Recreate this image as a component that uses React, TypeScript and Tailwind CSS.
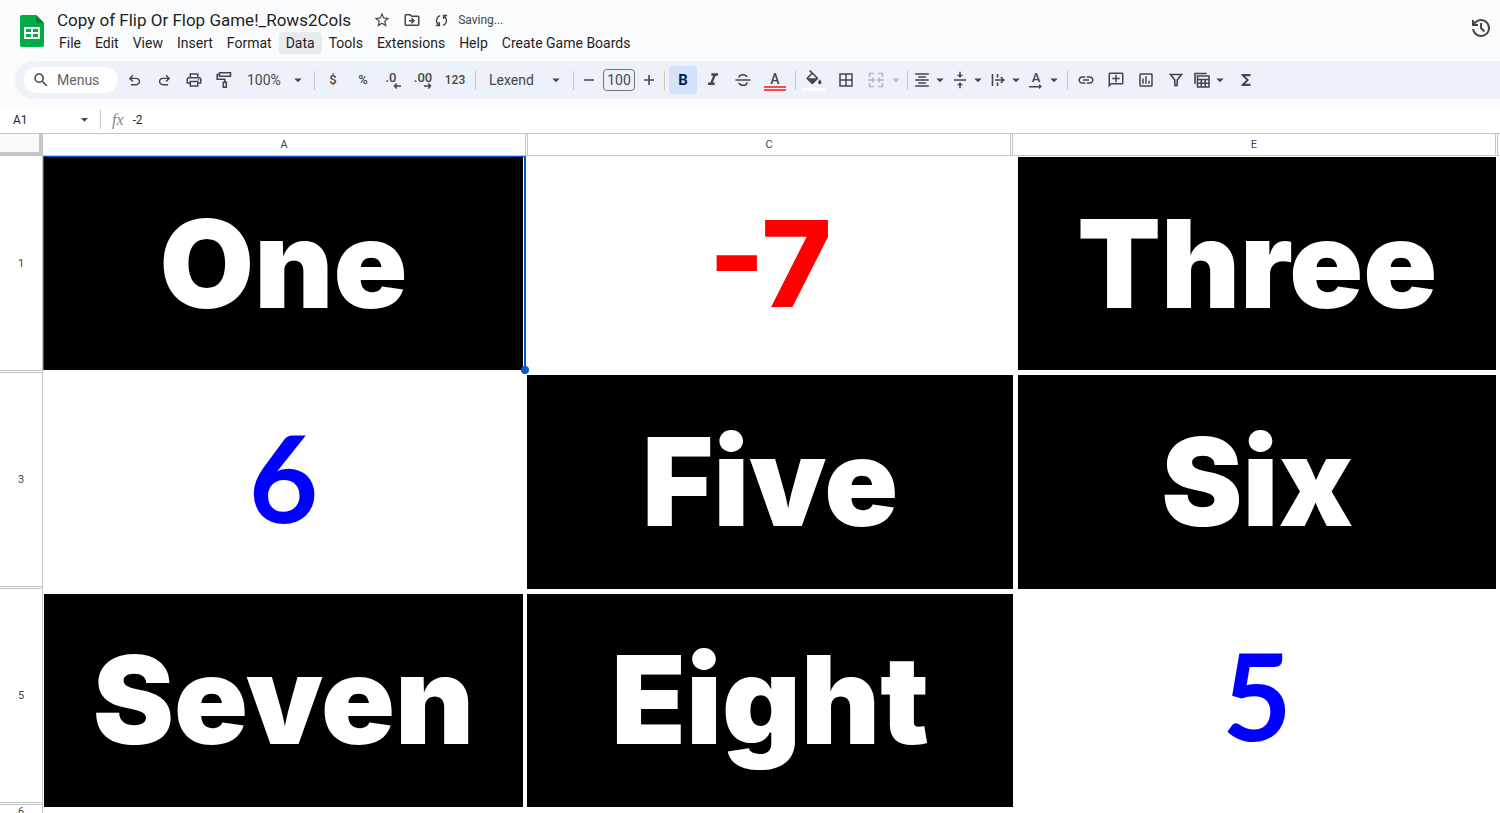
import React from 'react';
import {
  MdArrowDropDown,
  MdBorderAll,
  MdFormatAlignCenter,
  MdFormatItalic,
  MdFunctions,
  MdLink,
  MdOutlineAddComment,
  MdOutlineDriveFileMove,
  MdOutlineInsertChart,
  MdOutlinePrint,
  MdSearch,
  MdStarBorder,
  MdVerticalAlignCenter,
} from 'react-icons/md';

const MENUS = ['File', 'Edit', 'View', 'Insert', 'Format', 'Data', 'Tools', 'Extensions', 'Help', 'Create Game Boards'];

const UNDO =
  'M280-200v-80h284q63 0 109.5-40T720-420q0-60-46.5-100T564-560H312l104 104-56 56-200-200 200-200 56 56-104 104h252q97 0 166.5 63T800-420q0 94-69.5 157T564-200H280Z';
const REDO =
  'M396-200q-97 0-166.5-63T160-420q0-94 69.5-157T396-640h252L544-744l56-56 200 200-200 200-56-56 104-104H396q-63 0-109.5 40T240-420q0 60 46.5 100T396-280h284v80H396Z';
const SYNC =
  'M160-160v-80h110l-16-14q-52-46-73-105t-21-119q0-111 66.5-197.5T400-790v84q-72 26-116 88.5T240-478q0 45 17 87.5t53 78.5l10 10v-98h80v240H160Zm400-10v-84q72-26 116-88.5T720-482q0-45-17-87.5T650-648l-10-10v98h-80v-240h240v80H690l16 14q49 49 71.5 106.5T800-482q0 111-66.5 197.5T560-170Z';
const HISTORY =
  'M480-120q-138 0-240.5-91.5T122-440h82q14 104 92.5 172T480-200q117 0 198.5-81.5T760-480q0-117-81.5-198.5T480-760q-69 0-129 32t-101 88h110v80H120v-240h80v94q51-64 124.5-99T480-840q75 0 140.5 28.5t114 77q48.5 48.5 77 114T840-480q0 75-28.5 140.5t-77 114q-48.5 48.5-114 77T480-120Zm112-192L440-464v-216h80v184l128 128-56 56Z';

function Symbol({ d, size = 18 }: { d: string; size?: number }) {
  return (
    <svg width={size} height={size} viewBox="0 -960 960 960" fill="currentColor" aria-hidden="true">
      <path d={d} />
    </svg>
  );
}

function Glyph({ children }: { children: React.ReactNode }) {
  return (
    <svg width="18" height="18" viewBox="0 0 18 18" fill="none" stroke="currentColor" strokeWidth="1.6" className="shrink-0" aria-hidden="true">
      {children}
    </svg>
  );
}

function Tool({ label, className = 'w-7', children }: { label: string; className?: string; children: React.ReactNode }) {
  return (
    <button aria-label={label} className={`flex h-7 shrink-0 items-center justify-center rounded hover:bg-black/5 ${className}`}>
      {children}
    </button>
  );
}

function Divider({ className = 'mx-1' }: { className?: string }) {
  return <span className={`h-[19px] w-px shrink-0 bg-[#c7c7c7] ${className}`} />;
}

function SheetsLogo() {
  return (
    <svg width="24" height="32" viewBox="0 0 24 32" aria-label="Sheets">
      <path d="M2 0h14l8 8v22a2 2 0 0 1-2 2H2a2 2 0 0 1-2-2V2a2 2 0 0 1 2-2z" fill="#00ac47" />
      <path d="M16 0l8 8h-8z" fill="#00832d" />
      <path d="M4 12h16v12H4z" fill="#fff" />
      <path d="M6 14h5v3H6zM13 14h5v3h-5zM6 19h5v3H6zM13 19h5v3h-5z" fill="#00ac47" />
    </svg>
  );
}

function TitleBar() {
  return (
    <header className="flex items-start pt-2 pl-5 pr-[7px]">
      <a href="#home" aria-label="Sheets home" className="mt-[7px] shrink-0">
        <SheetsLogo />
      </a>
      <div className="ml-[7px] flex-1">
        <div className="flex h-6 items-center pl-[6px] text-[#444746]">
          <h1 className="text-[17px] leading-6 text-[#1f1f1f]">Copy of Flip Or Flop Game!_Rows2Cols</h1>
          <button aria-label="Star" className="ml-[22px]"><MdStarBorder size={18} /></button>
          <button aria-label="Move" className="ml-3"><MdOutlineDriveFileMove size={18} /></button>
          <span className="ml-3 flex items-center gap-2 text-[12px]">
            <Symbol d={SYNC} size={17} />
            Saving...
          </span>
        </div>
        <nav className="flex pl-px text-[14px] leading-[22px] text-[#1f1f1f]">
          {MENUS.map((menu) => (
            <button key={menu} className={`h-[22px] rounded px-[7px] ${menu === 'Data' ? 'bg-[#e8ebee]' : ''}`}>
              {menu}
            </button>
          ))}
        </nav>
      </div>
      <button aria-label="Version history" className="mt-2 text-[#444746]">
        <Symbol d={HISTORY} size={24} />
      </button>
    </header>
  );
}

function Toolbar() {
  return (
    <div role="toolbar" className="mt-[7px] ml-[15px] flex h-[38px] items-center overflow-hidden rounded-l-full bg-[#edf2fa] pl-[9px] text-[#444746]">
      <label className="mr-[2px] flex h-[26px] w-[94px] shrink-0 items-center rounded-full bg-white pl-2">
        <MdSearch size={18} className="shrink-0" />
        <input aria-label="Search menus" placeholder="Menus" className="ml-[7px] w-14 text-[14px] outline-none placeholder:text-[#5f6368]" />
      </label>
      <div className="flex gap-[2px]">
        <Tool label="Undo"><Symbol d={UNDO} size={17} /></Tool>
        <Tool label="Redo"><Symbol d={REDO} size={17} /></Tool>
        <Tool label="Print"><MdOutlinePrint size={18} /></Tool>
        <Tool label="Paint format">
          <Glyph>
            <path d="M4.5 1.8h11v3.5h-11zM4.500 3.500H2.200v4.700h7.600v3M8.300 11.200h3v5h-3z" />
          </Glyph>
        </Tool>
      </div>
      <label className="ml-[9px] flex h-7 w-[60px] shrink-0 items-center">
        <select aria-label="Zoom" defaultValue="100%" className="w-[42px] appearance-none text-[14px] outline-none">
          <option>100%</option>
          <option>75%</option>
        </select>
        <MdArrowDropDown size={18} className="shrink-0" />
      </label>
      <Divider className="ml-[7px] mr-1" />
      <div className="flex gap-[2px]">
        <Tool label="Format as currency"><span className="text-[13px] font-medium">$</span></Tool>
        <Tool label="Format as percent"><span className="text-[13px] font-medium">%</span></Tool>
        <Tool label="Decrease decimal places">
          <span className="flex flex-col items-end text-[13px] leading-[11px] font-medium">
            <span className="pr-1">.0</span>
            <svg width="8" height="6" viewBox="0 0 8 6" fill="none" stroke="currentColor" strokeWidth="1.4"><path d="M8 3H1.5M3.8.6L1.4 3l2.4 2.4" /></svg>
          </span>
        </Tool>
        <Tool label="Increase decimal places">
          <span className="flex flex-col items-end text-[13px] leading-[11px] font-medium">
            <span>.00</span>
            <svg width="8" height="6" viewBox="0 0 8 6" fill="none" stroke="currentColor" strokeWidth="1.4"><path d="M0 3h6.5M4.2.6L6.6 3 4.2 5.4" /></svg>
          </span>
        </Tool>
        <Tool label="More formats" className="w-8"><span className="text-[12px] font-medium">123</span></Tool>
      </div>
      <Divider />
      <label className="ml-[9px] flex h-7 w-[76px] shrink-0 items-center">
        <select aria-label="Font" defaultValue="Lexend" className="w-[58px] appearance-none text-[14px] outline-none">
          <option>Lexend</option>
          <option>Arial</option>
        </select>
        <MdArrowDropDown size={18} className="shrink-0" />
      </label>
      <Divider className="ml-2 mr-[5px]" />
      <Tool label="Decrease font size" className="w-5"><Glyph><path d="M4 9h10" /></Glyph></Tool>
      <input aria-label="Font size" defaultValue="100" className="mx-1 h-[22px] w-8 shrink-0 rounded border border-[#747775] text-center text-[14px] outline-none" />
      <Tool label="Increase font size" className="w-5"><Glyph><path d="M4 9h10M9 4v10" /></Glyph></Tool>
      <Divider className="ml-[5px] mr-1" />
      <div className="flex gap-[2px]">
        <Tool label="Bold" className="w-7 bg-[#d3e3fd] text-[#041e49]"><span className="text-[15px] font-bold">B</span></Tool>
        <Tool label="Italic"><MdFormatItalic size={20} /></Tool>
        <Tool label="Strikethrough">
          <Glyph>
            <path d="M1.500 9h15M5 6.700c.2-2 1.800-3 4-3 1.900 0 3.300.8 3.900 2.300M13 11.200c0 2-1.600 3.100-4 3.100-2.100 0-3.500-.8-4-2.500" />
          </Glyph>
        </Tool>
        <Tool label="Text color" className="w-8">
          <span className="flex flex-col items-center pt-[3px] text-[14px] leading-[14px] font-medium">
            A
            <span className="h-[5px] w-[22px] border-y-2 border-[#fa4b4b]" />
          </span>
        </Tool>
      </div>
      <Divider className="mx-1" />
      <Tool label="Fill color">
        <span className="flex flex-col items-center gap-[3px]">
          <svg width="20" height="15" viewBox="0 0 24 18" fill="currentColor" aria-hidden="true">
            <path d="M16.56 8.94L7.62 0 6.21 1.41l2.38 2.38-5.15 5.15c-.59.59-.59 1.54 0 2.12l5.5 5.5c.29.29.68.44 1.06.44s.77-.15 1.06-.44l5.5-5.5c.59-.58.59-1.53 0-2.12zM5.21 10L10 5.21 14.790 10H5.210zM19 11.500s-2 2.170-2 3.500c0 1.100.9 2 2 2s2-.9 2-2c0-1.330-2-3.500-2-3.500z" />
          </svg>
          <span className="h-[3px] w-[22px] bg-white" />
        </span>
      </Tool>
      <Tool label="Borders" className="ml-1 w-7"><MdBorderAll size={18} /></Tool>
      <Tool label="Merge cells" className="ml-[2px] w-7 text-[#b5b8bc]">
        <Glyph>
          <path d="M7 2.500H2.500V6M11 2.500h4.500V6M7 15.500H2.500V12M11 15.500h4.500V12M1 9h6M5 6.800L7.200 9 5 11.200M17 9h-6M13 6.800L10.800 9l2.200 2.200" />
        </Glyph>
      </Tool>
      <MdArrowDropDown size={18} className="-ml-[3px] shrink-0 text-[#b5b8bc]" />
      <Divider className="ml-[2px] mr-1" />
      <Tool label="Horizontal align" className="w-[38px]"><MdFormatAlignCenter size={18} className="shrink-0" /><MdArrowDropDown size={18} className="shrink-0" /></Tool>
      <Tool label="Vertical align" className="w-[38px]"><MdVerticalAlignCenter size={18} className="shrink-0" /><MdArrowDropDown size={18} className="shrink-0" /></Tool>
      <Tool label="Text wrapping" className="w-[38px]">
        <Glyph><path d="M3.500 3v12M8.500 3v3.500M8.500 11.500V15M6 9h8.500M11.800 6L14.700 9l-2.900 3" /></Glyph>
        <MdArrowDropDown size={18} className="shrink-0" />
      </Tool>
      <Tool label="Text rotation" className="w-[38px]">
        <span className="flex w-[18px] flex-col items-center text-[13px] leading-3 font-medium">
          A
          <svg width="14" height="5" viewBox="0 0 14 5" fill="currentColor"><path d="M0 2h10V0l3 2.500-3 2.500V3.500H0z" /></svg>
        </span>
        <MdArrowDropDown size={18} className="shrink-0" />
      </Tool>
      <Divider className="ml-[3px] mr-1" />
      <div className="flex gap-[2px]">
        <Tool label="Insert link"><MdLink size={18} /></Tool>
        <Tool label="Insert comment"><MdOutlineAddComment size={18} className="-scale-x-100" /></Tool>
        <Tool label="Insert chart"><MdOutlineInsertChart size={18} /></Tool>
        <Tool label="Create a filter"><Glyph><path d="M3.500 3.500h11L10.200 9v5.500H7.800V9z" /></Glyph></Tool>
        <Tool label="Table views" className="w-[38px]">
          <Glyph>
            <path d="M2 13V2.500h11.500M4.500 5h11.500v11H4.500zM4.500 8.500H16M4.500 12.200H16M8.300 8.500V16M12.200 8.500V16" />
          </Glyph>
          <MdArrowDropDown size={18} className="shrink-0" />
        </Tool>
        <Tool label="Functions"><MdFunctions size={18} /></Tool>
      </div>
    </div>
  );
}

function FormulaBar() {
  return (
    <div className="mt-[7px] flex h-[27px] items-center bg-white pl-[13px] text-[12px] text-[#1f1f1f]">
      <input aria-label="Name box" defaultValue="A1" className="w-[63px] outline-none" />
      <MdArrowDropDown size={17} className="text-[#444746]" />
      <Divider className="ml-[7px] mr-[11px]" />
      <span className="font-['Liberation_Serif',serif] text-[16px] leading-4 italic text-[#80868b]">fx</span>
      <input aria-label="Formula" defaultValue="-2" className="ml-[9px] flex-1 outline-none" />
    </div>
  );
}

interface BoardCell {
  text: string;
  tone: string;
}

const HIDDEN = "bg-black text-white font-['Inter',sans-serif] text-[122px] font-black";
const NEGATIVE = "bg-white text-[#ff0000] font-['Inter',sans-serif] text-[120px] font-extrabold";
const POSITIVE = "bg-white pb-[10px] text-[#0000ff] font-['Lato',sans-serif] text-[120px] font-bold";

const BOARD: BoardCell[][] = [
  [{ text: 'One', tone: HIDDEN }, { text: '-7', tone: NEGATIVE }, { text: 'Three', tone: HIDDEN }],
  [{ text: '6', tone: POSITIVE }, { text: 'Five', tone: HIDDEN }, { text: 'Six', tone: HIDDEN }],
  [{ text: 'Seven', tone: HIDDEN }, { text: 'Eight', tone: HIDDEN }, { text: '5', tone: POSITIVE }],
];

function Grid() {
  return (
    <main className="overflow-hidden bg-white text-[11px] text-[#444746]">
      {/* Column letters */}
      <div className="flex h-[23px] border-y border-[#c4c7c5]">
        <div className="w-[43px] shrink-0 border-r-4 border-b-3 border-[#c4c7c5] bg-[#f8f9fa]" />
        {['A', 'C', 'E'].map((letter) => (
          <div key={letter} className="flex flex-1 items-center justify-center border-r-3 border-double border-[#c4c7c5] pt-px">
            {letter}
          </div>
        ))}
        <div className="w-[2px]" />
      </div>
      <div className="flex">
        {/* Row numbers */}
        <div className="w-[43px] shrink-0 border-r border-[#c4c7c5] pt-px">
          {['1', '3', '5'].map((row) => (
            <div key={row} className="flex h-[216px] items-center justify-center border-b-3 border-double border-[#c4c7c5] pt-[2px]">
              {row}
            </div>
          ))}
          <div className="pt-px text-center leading-3">6</div>
        </div>
        <div className="relative flex-1 pt-px pl-px">
          <table className="h-[650px] w-full table-fixed border-collapse">
            <colgroup>
              <col className="w-[32.9%]" />
              <col className="w-1" />
              <col className="w-[33.4%]" />
              <col className="w-[5px]" />
              <col />
              <col className="w-1" />
            </colgroup>
            <tbody>
              {BOARD.map((cells, r) => (
                <React.Fragment key={r}>
                  <tr className="h-[213px]">
                    {cells.map((cell, c) => (
                      <React.Fragment key={c}>
                        <td className={`relative px-0 pt-0 text-center align-middle leading-[120px] ${cell.tone}`}>
                          {cell.text}
                          {r === 0 && c === 0 && (
                            <>
                              <span className="absolute -top-px bottom-0 -left-px -right-[3px] border border-r-2 border-b-0 border-[#0b57d0]" />
                              <span className="absolute -right-[6px] -bottom-1 z-10 size-2 rounded-full bg-[#0b57d0]" />
                            </>
                          )}
                        </td>
                        <td className="p-0" />
                      </React.Fragment>
                    ))}
                  </tr>
                  {r < 2 && <tr className="h-[5px]"><td colSpan={6} className="p-0" /></tr>}
                </React.Fragment>
              ))}
            </tbody>
          </table>
        </div>
      </div>
    </main>
  );
}

export default function App() {
  return (
    <div className="h-screen overflow-hidden bg-[#f9fbfd] font-['Roboto',sans-serif]">
      <TitleBar />
      <Toolbar />
      <FormulaBar />
      <Grid />
    </div>
  );
}
